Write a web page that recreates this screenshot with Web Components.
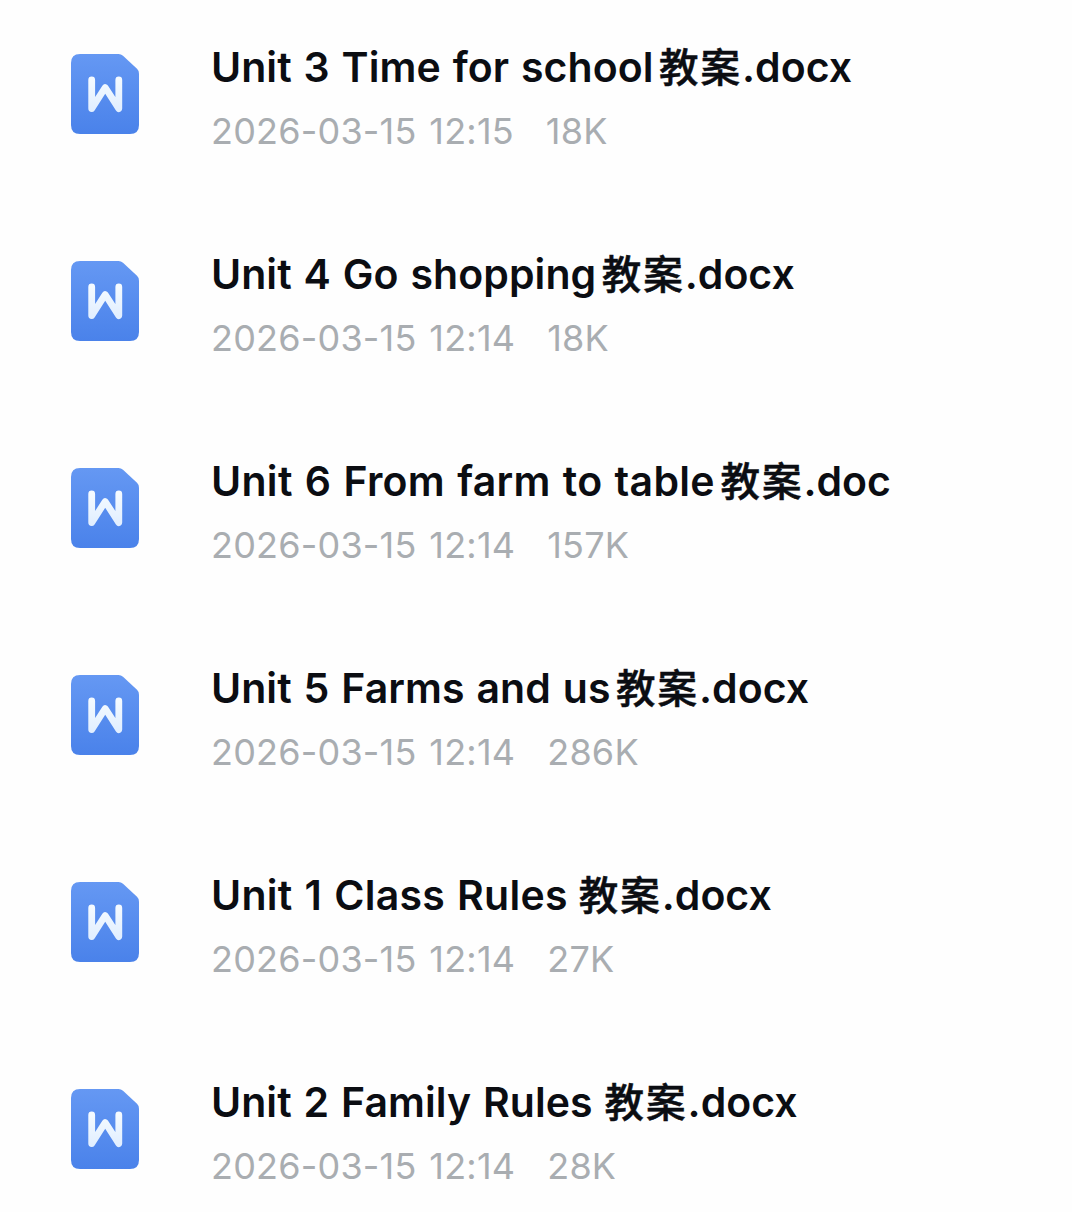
<!DOCTYPE html>
<html lang="zh-CN">
<head>
<meta charset="UTF-8">
<title>教案</title>
<style>
  body {
    margin: 0;
    background: #fefefe;
    font-family: Inter, "Noto Sans CJK SC", sans-serif;
  }
</style>
</head>
<body>
<file-list>
  <file-item date="2026-03-15 12:15" size="18K"><span>Unit 3 Time for school</span><b>教案</b>.docx</file-item>
  <file-item date="2026-03-15 12:14" size="18K"><span>Unit 4 Go shopping</span><b>教案</b>.docx</file-item>
  <file-item date="2026-03-15 12:14" size="157K" style="--tracking: 0.3px"><span>Unit 6 From farm to table</span><b>教案</b>.doc</file-item>
  <file-item date="2026-03-15 12:14" size="286K"><span>Unit 5 Farms and us</span><b>教案</b>.docx</file-item>
  <file-item date="2026-03-15 12:14" size="27K" style="--tracking: 0.25px; --cjk-gap: -1px"><span>Unit 1 Class Rules </span><b>教案</b>.docx</file-item>
  <file-item date="2026-03-15 12:14" size="28K" style="--cjk-gap: 0"><span>Unit 2 Family Rules </span><b>教案</b>.docx</file-item>
</file-list>

<script>
class FileList extends HTMLElement {
  connectedCallback() {
    this.attachShadow({ mode: 'open' });
    this.shadowRoot.innerHTML = `
      <style>
        :host {
          display: flex;
          flex-direction: column;
          box-sizing: border-box;
          height: 1212px;
          padding-top: 42px;
          overflow: hidden;
        }
      </style>
      <slot></slot>
    `;
  }
}

class DocIcon extends HTMLElement {
  connectedCallback() {
    this.attachShadow({ mode: 'open' });
    this.shadowRoot.innerHTML = `
      <style>
        :host {
          display: block;
          width: 68px;
          height: 80px;
        }
        svg {
          display: block;
        }
      </style>
      <svg width="68" height="80" viewBox="0 0 68 80" fill="none">
        <defs>
          <linearGradient id="page" x1="0" y1="0" x2="0" y2="1">
            <stop offset="0" stop-color="#6598f3"/>
            <stop offset="1" stop-color="#4a82ea"/>
          </linearGradient>
          <linearGradient id="mark" x1="0" y1="0" x2="0" y2="1">
            <stop offset="0" stop-color="#f4faff"/>
            <stop offset="1" stop-color="#e2efff"/>
          </linearGradient>
        </defs>
        <path fill="url(#page)" d="M9 0H47.5Q50 0 52 1.7L66 14.8Q68 16.8 68 19.5V71Q68 80 59 80H9Q0 80 0 71V9Q0 0 9 0Z"/>
        <path stroke="url(#mark)" stroke-width="6.8" stroke-linecap="round" stroke-linejoin="round" d="M20.7 26V54.6L34.2 33.5L47.8 54.6V26"/>
      </svg>
    `;
  }
}

class FileItem extends HTMLElement {
  connectedCallback() {
    this.attachShadow({ mode: 'open' });
    this.shadowRoot.innerHTML = `
      <style>
        :host {
          display: flex;
          flex: none;
          gap: 72px;
          height: 207px;
          padding-left: 71px;
        }
        doc-icon {
          flex: none;
          margin-top: 12px;
        }
        .info {
          display: flex;
          flex-direction: column;
          gap: 16px;
        }
        .name {
          font-size: 41px;
          font-weight: 600;
          line-height: 50px;
          color: #0b0d12;
          white-space: pre;
        }
        ::slotted(span) {
          letter-spacing: var(--tracking, 0.06px);
          word-spacing: 1.5px;
        }
        ::slotted(b) {
          margin-left: var(--cjk-gap, 5.5px);
          font-size: 39.5px;
          font-weight: 500;
          letter-spacing: 2px;
          -webkit-text-stroke: 0.5px currentColor;
        }
        .meta {
          display: flex;
          gap: 32px;
          font-size: 36px;
          line-height: 44px;
          letter-spacing: 0.2px;
          word-spacing: 2.5px;
          color: #a9adb1;
        }
      </style>
      <doc-icon></doc-icon>
      <div class="info">
        <div class="name"><slot></slot></div>
        <div class="meta">
          <span>${this.getAttribute('date')}</span>
          <span>${this.getAttribute('size')}</span>
        </div>
      </div>
    `;
  }
}

customElements.define('file-list', FileList);
customElements.define('doc-icon', DocIcon);
customElements.define('file-item', FileItem);
</script>
</body>
</html>
